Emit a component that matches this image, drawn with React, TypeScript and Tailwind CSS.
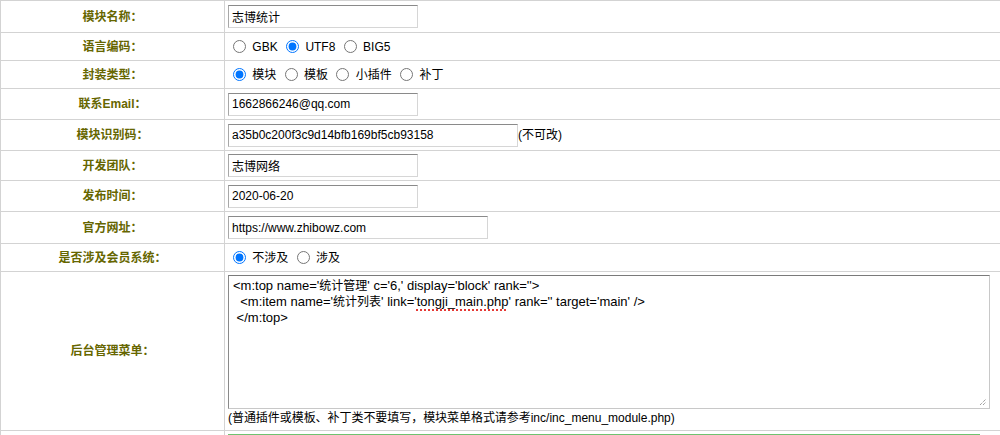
import { ReactNode } from "react";

const FONT = "font-['Liberation_Sans','Noto_Sans_CJK_SC',sans-serif]";

const Row = ({
  label,
  h,
  top = false,
  children,
}: {
  label: string;
  h: string;
  top?: boolean;
  children?: ReactNode;
}) => (
  <div className={`flex border-b border-[#d3d3d3] ${h}`}>
    <div className="w-[224px] shrink-0 border-r border-[#d3d3d3] flex items-center justify-center font-bold text-[#666600]">
      {label}
    </div>
    <div
      className={
        top ? "flex-1 flex flex-col items-start pl-[3px] pt-[3px]" : "flex-1 flex items-center pl-[3px]"
      }
    >
      {children}
    </div>
  </div>
);

const TextBox = ({ value, w }: { value: string; w: string }) => (
  <input
    readOnly
    defaultValue={value}
    className={`${w} h-[23px] px-[3px] text-[12px] text-black bg-white border border-t-[#8a8a8a] border-l-[#a8a8a8] border-r-[#d6d6d6] border-b-[#d6d6d6] outline-none`}
  />
);

const Radios = ({ name, items, checked }: { name: string; items: string[]; checked: number }) => (
  <div className="leading-[16px]">
    {items.map((it, i) => (
      <span key={it}>
        <input
          type="radio"
          name={name}
          defaultChecked={i === checked}
          className="ml-[5px] mr-[3px] my-0 w-[13px] h-[13px] align-[-2px]"
        />{" "}
        {it}{" "}
      </span>
    ))}
  </div>
);

// CJK bits inside the menu box stay at 12px, the latin code is a touch larger
const Cjk = ({ children }: { children: string }) => <span className="text-[12px]">{children}</span>;

export default function App() {
  return (
    <div className={`${FONT} text-[12px] text-black bg-white w-full min-h-screen`}>
      <div className="border-t border-l border-[#d3d3d3]">
        <Row label="模块名称：" h="h-[32px]">
          <TextBox value="志博统计" w="w-[190px]" />
        </Row>
        <Row label="语言编码：" h="h-[28px]">
          <Radios name="lang" items={["GBK", "UTF8", "BIG5"]} checked={1} />
        </Row>
        <Row label="封装类型：" h="h-[28px]">
          <Radios name="kind" items={["模块", "模板", "小插件", "补丁"]} checked={0} />
        </Row>
        <Row label="联系Email：" h="h-[31px]">
          <TextBox value="1662866246@qq.com" w="w-[190px]" />
        </Row>
        <Row label="模块识别码：" h="h-[31px]">
          <TextBox value="a35b0c200f3c9d14bfb169bf5cb93158" w="w-[290px]" />
          <span>(不可改)</span>
        </Row>
        <Row label="开发团队：" h="h-[30px]">
          <TextBox value="志博网络" w="w-[190px]" />
        </Row>
        <Row label="发布时间：" h="h-[31px]">
          <TextBox value="2020-06-20" w="w-[190px]" />
        </Row>
        <Row label="官方网址：" h="h-[32px]">
          <TextBox value="https://www.zhibowz.com" w="w-[260px]" />
        </Row>
        <Row label="是否涉及会员系统：" h="h-[28px]">
          <Radios name="member" items={["不涉及", "涉及"]} checked={0} />
        </Row>
        <Row label="后台管理菜单：" h="h-[159px]" top>
          <div className="relative w-[762px] h-[134px] bg-white border border-t-[#7a7a7a] border-l-[#8a8a8a] border-r-[#c8c8c8] border-b-[#c8c8c8] pl-[4px] pt-[2px] text-[13px] leading-[16px] whitespace-pre">
            <div>
              {"<m:top name='"}
              <Cjk>统计管理</Cjk>
              {"' c='6,' display='block' rank=''>"}
            </div>
            <div>
              {"  <m:item name='"}
              <Cjk>统计列表</Cjk>
              {"' link='"}
              <span className="underline decoration-dotted decoration-[#e53935] decoration-2 underline-offset-[3px]">
                tongji_main.php
              </span>
              {"' rank='' target='main' />"}
            </div>
            <div>{" </m:top>"}</div>
            <svg
              className="absolute right-[2px] bottom-[2px]"
              width="8"
              height="8"
              viewBox="0 0 8 8"
            >
              <path d="M1 7 L7 1 M4 7 L7 4" stroke="#777" strokeWidth="1" strokeDasharray="1 1" />
            </svg>
          </div>
          <div className="mt-[1px] leading-[16px]">
            <span className="tracking-[-0.05px]">(普通插件或模板、补丁类不要填写，模块菜单格式请参考</span>
            inc/inc_menu_module.php)
          </div>
        </Row>
        <div className="flex h-[20px]">
          <div className="w-[224px] shrink-0 border-r border-[#d3d3d3]" />
          <div className="flex-1 pl-[3px] pt-[3px]">
            <div className="w-[752px] h-[2px] bg-[#6fc26f]" />
          </div>
        </div>
      </div>
    </div>
  );
}
